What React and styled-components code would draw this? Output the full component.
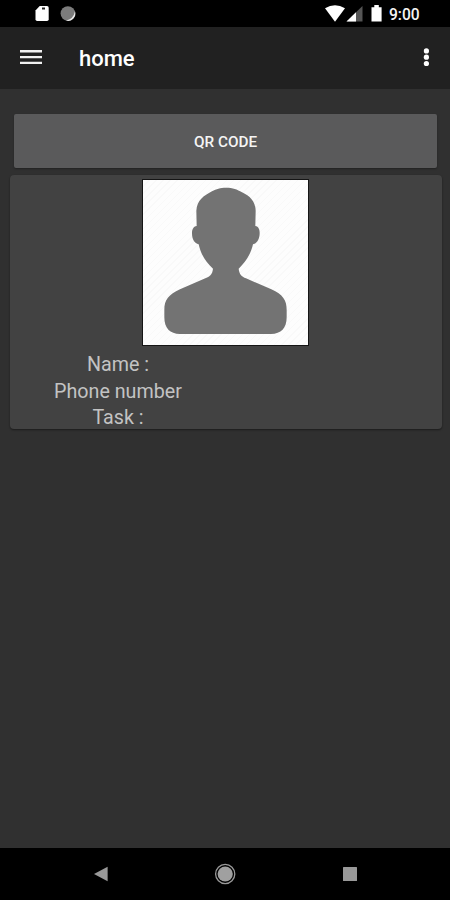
import React from "react";
import styled, { createGlobalStyle } from "styled-components";

const GlobalStyle = createGlobalStyle`
  * { box-sizing: border-box; }
  body { margin: 0; background: #303030; font-family: Roboto, sans-serif; }
`;

const Screen = styled.div`
  width: 450px;
  height: 900px;
  display: flex;
  flex-direction: column;
  background: #303030;
  overflow: hidden;
`;

const StatusBar = styled.header`
  height: 27px;
  flex: none;
  background: #000;
  display: flex;
  justify-content: space-between;
  padding: 0 30px 0 35px;
`;

const StatusGroup = styled.div`
  display: flex;
  height: 27px;
  align-items: center;
`;

const Clock = styled.span`
  width: 31px;
  margin-left: 7px;
  font-size: 15.6px;
  font-weight: 500;
  line-height: 28px;
  padding-top: 2px;
  color: #f4f4f4;
  white-space: nowrap;
`;

const AppBar = styled.nav`
  height: 62px;
  flex: none;
  display: flex;
  align-items: center;
  padding: 0 14px 0 20px;
  background: #212121;
`;

const IconButton = styled.button`
  width: ${(p) => p.$width}px;
  height: 30px;
  padding: 0;
  border: 0;
  background: none;
  display: flex;
  align-items: center;
  justify-content: center;
`;

const Title = styled.h1`
  flex: 1;
  margin: 0 0 0 37px;
  padding-top: 2px;
  font-size: 22px;
  font-weight: 500;
  line-height: 30px;
  color: #fff;
`;

const Content = styled.main`
  flex: 1;
  display: flex;
  flex-direction: column;
  padding: 25px 8px 0 10px;
`;

const QrButton = styled.button`
  height: 54px;
  margin: 0 5px 7px 4px;
  padding: 2px 0 0;
  border: 0;
  border-radius: 2px;
  background: #5a5a5b;
  color: #f5f5f5;
  font-family: inherit;
  font-size: 15.3px;
  font-weight: 500;
  box-shadow: 0 1px 2px rgba(0, 0, 0, 0.3);
`;

const Card = styled.section`
  height: 254px;
  padding-top: 4px;
  border-radius: 4px;
  background: #424242;
  box-shadow: 0 1px 2px rgba(0, 0, 0, 0.45);
`;

const Portrait = styled.div`
  width: 167px;
  height: 167px;
  margin: 0 0 0 132px;
  border: 1px solid #151515;
  background: repeating-linear-gradient(135deg, #fdfdfd 0 4px, #f9f9f9 4px 5px);

  svg { display: block; }
`;

const Details = styled.div`
  width: 50%;
  padding-top: 6px;
  text-align: center;
`;

const DetailLabel = styled.p`
  margin: 0;
  font-size: 19.7px;
  line-height: 26.5px;
  color: #c3c3c3;
`;

const NavigationBar = styled.footer`
  height: 52px;
  flex: none;
  background: #000;
  display: flex;
  justify-content: center;
  align-items: center;
  gap: 101px;
`;

const SdCardIcon = () => (
  <svg width="42" height="27" viewBox="0 0 42 27">
    <path d="M4.7 6H12q1.7 0 1.7 1.7v11.6q0 1.7-1.7 1.7H2.2Q.5 21 .5 19.3V10.6Z" fill="#fff" />
    <path d="M7 7.5h3v2H7z" fill="#222" />
    <circle cx="32.9" cy="13.5" r="7.3" fill="#7c7c7c" />
    <path d="M40 11.2A7.4 7.4 0 0 1 30.8 20.6Q38.4 19.2 40 11.2Z" fill="#e9e9e9" />
  </svg>
);

const SignalIcons = () => (
  <svg width="57" height="27" viewBox="325 0 57 27">
    <path d="M325 8.2Q335 2.2 345 8.2L335 21.8Z" fill="#fff" />
    <path d="M346.5 21.5 362.5 6v15.5Z" fill="#555" />
    <path d="M346.5 21.5 356 12.3v9.2Z" fill="#fff" />
    <path d="M371.5 7.2h2.8V5h4.5v2.2h2.8v14.3h-10.1z" fill="#fff" />
  </svg>
);

const MenuIcon = () => (
  <svg width="22" height="16" viewBox="0 0 22 16" fill="none" stroke="#f1f1f1" strokeWidth="2.4">
    <path d="M0 1.3H22M0 7.1H22M0 12.9H22" />
  </svg>
);

const MoreIcon = () => (
  <svg width="8" height="22" viewBox="0 0 8 22" fill="#fff">
    <circle cx="4.4" cy="3.9" r="2.6" />
    <circle cx="4.4" cy="10.2" r="2.6" />
    <circle cx="4.4" cy="16.5" r="2.6" />
  </svg>
);

const Silhouette = () => (
  <svg width="165" height="165" viewBox="39 30 495 495" role="img" aria-label="Profile picture">
    <path
      fill="#737373"
      d="M288 53C309 53 321 58 336 67C359 78 376 93 377 122L376 168C386 170 389 178 389 190C389 208 380 221 369 223C363 251 347 276 326 296C328 313 334 319 348 325L424 358C459 374 470 391 470 420V442C470 475 453 492 423 492H150C120 492 103 475 103 442V420C103 389 116 374 150 358L226 325C242 318 247 312 249 296C227 276 212 252 206 223C194 221 186 208 186 190C186 178 190 170 200 168L199 122C201 91 221 77 246 64C260 57 270 53 288 53Z"
    />
  </svg>
);

const BackIcon = () => (
  <svg width="24" height="24" viewBox="0 0 24 24">
    <path d="M6 12 19.6 4.8v14.4Z" fill="#999" />
  </svg>
);

const HomeIcon = () => (
  <svg width="24" height="24" viewBox="0 0 24 24">
    <circle cx="12.2" cy="12" r="9.6" fill="none" stroke="#999" strokeWidth="1.3" />
    <circle cx="12.2" cy="12" r="7.6" fill="#a0a0a0" />
  </svg>
);

const RecentsIcon = () => (
  <svg width="24" height="24" viewBox="0 0 24 24">
    <rect x="5" y="5" width="14" height="14" rx="0.5" fill="#999" />
  </svg>
);

export default function App() {
  return (
    <>
      <GlobalStyle />
      <Screen>
        <StatusBar>
          <StatusGroup><SdCardIcon /></StatusGroup>
          <StatusGroup>
            <SignalIcons />
            <Clock>9:00</Clock>
          </StatusGroup>
        </StatusBar>
        <AppBar>
          <IconButton $width={22} aria-label="Menu"><MenuIcon /></IconButton>
          <Title>home</Title>
          <IconButton $width={20} aria-label="More options"><MoreIcon /></IconButton>
        </AppBar>
        <Content>
          <QrButton>QR CODE</QrButton>
          <Card>
            <Portrait><Silhouette /></Portrait>
            <Details>
              <DetailLabel>Name :</DetailLabel>
              <DetailLabel>Phone number</DetailLabel>
              <DetailLabel>Task :</DetailLabel>
            </Details>
          </Card>
        </Content>
        <NavigationBar>
          <IconButton $width={24} aria-label="Back"><BackIcon /></IconButton>
          <IconButton $width={24} aria-label="Home"><HomeIcon /></IconButton>
          <IconButton $width={24} aria-label="Recent apps"><RecentsIcon /></IconButton>
        </NavigationBar>
      </Screen>
    </>
  );
}
